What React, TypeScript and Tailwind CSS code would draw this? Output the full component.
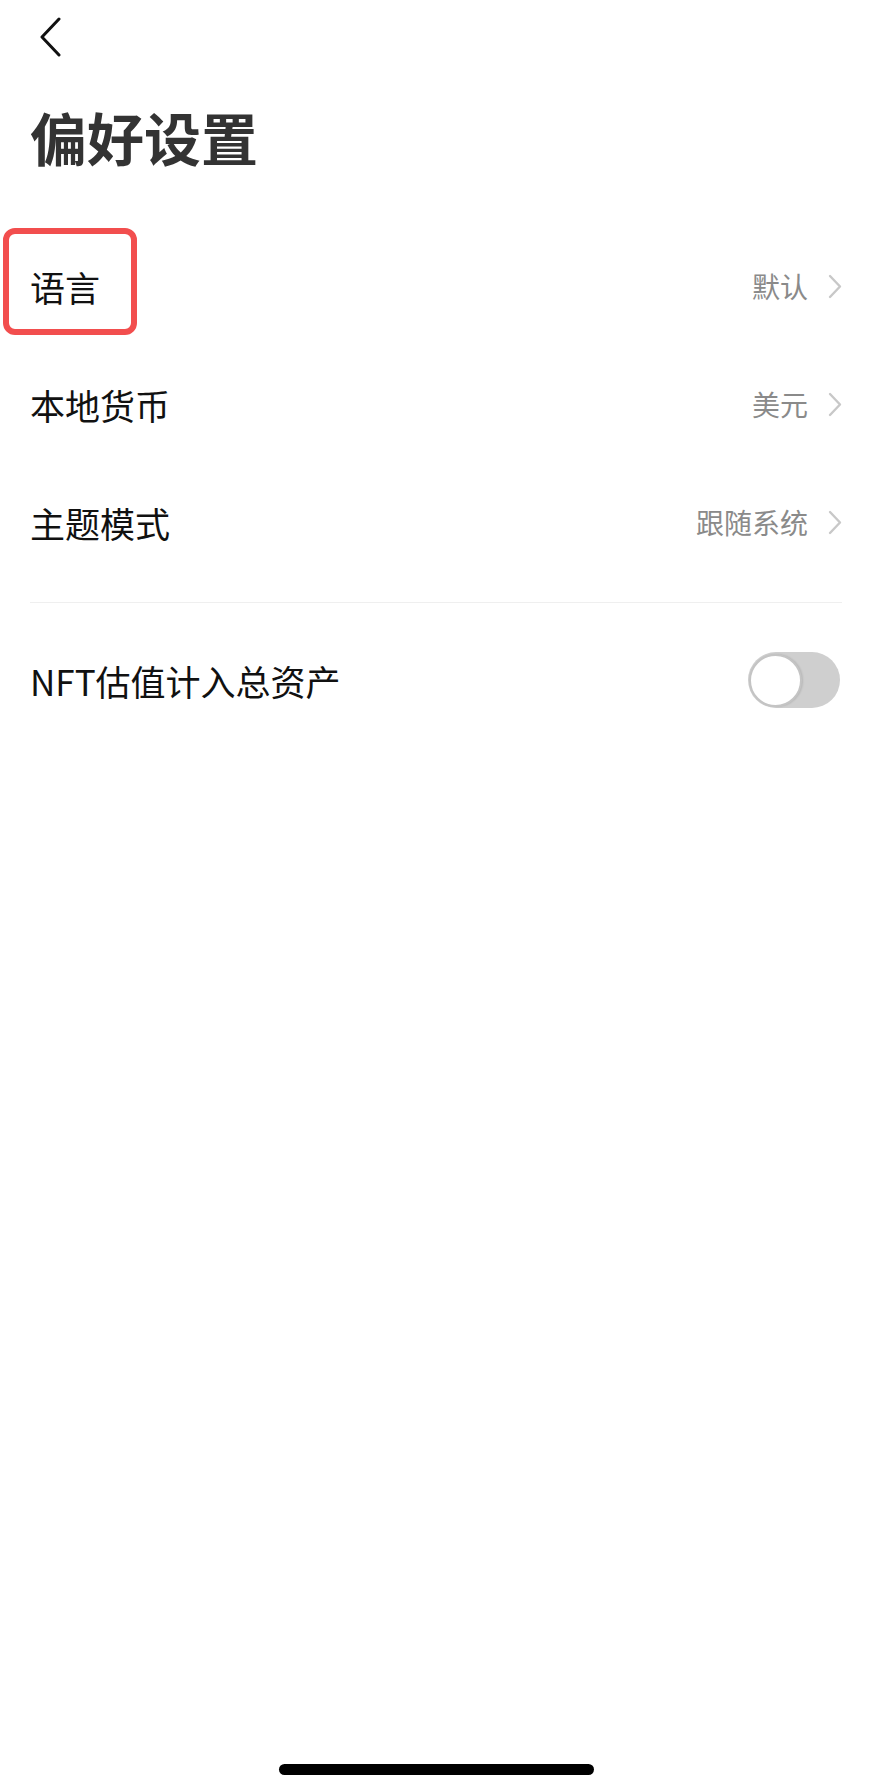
import React from "react";

function Chevron() {
  return (
    <svg width="14" height="25" viewBox="0 0 14 25" fill="none">
      <path d="M2 2 L12 12.5 L2 23" stroke="#c8c8c8" strokeWidth="2.4" strokeLinecap="round" strokeLinejoin="round" />
    </svg>
  );
}

function Row({ label, value }: { label: string; value: string }) {
  return (
    <div className="flex h-[118px] items-center justify-between">
      <span className="text-[35px] font-normal leading-none text-[#111]">{label}</span>
      <div className="flex items-center gap-[20px]">
        <span className="text-[28px] leading-none text-[#8a8a8a]">{value}</span>
        <Chevron />
      </div>
    </div>
  );
}

export default function App() {
  return (
    <div
      className="relative flex h-[1790px] w-[872px] flex-col bg-white"
      style={{ fontFamily: '"Noto Sans CJK SC", "Noto Sans", sans-serif' }}
    >
      <div className="flex h-[108px] items-start pl-[40px] pt-[17px]">
        <svg width="22" height="40" viewBox="0 0 22 40" fill="none">
          <path d="M19 2 L2 20 L19 38" stroke="#111" strokeWidth="3" strokeLinecap="round" strokeLinejoin="round" />
        </svg>
      </div>
      <h1 className="pl-[30px] text-[57px] font-bold leading-none text-[#333]">偏好设置</h1>
      <div className="mt-[62px] px-[30px]">
        <Row label="语言" value="默认" />
        <Row label="本地货币" value="美元" />
        <Row label="主题模式" value="跟随系统" />
        <div className="mt-[21px] h-px bg-[#efefef]" />
        <div className="flex h-[154px] items-center justify-between">
          <span className="text-[35px] font-normal leading-none text-[#111]">NFT估值计入总资产</span>
          <div className="mr-[2px] flex h-[56px] w-[92px] items-center rounded-full bg-[#cfcfcf] pl-[1px]">
            <div className="h-[53px] w-[53px] rounded-full border-[2px] border-[#c4c4c4] bg-white shadow-[1px_0_2px_rgba(0,0,0,0.12)]" />
          </div>
        </div>
      </div>
      <div className="mx-auto mb-[15px] mt-auto h-[11px] w-[315px] rounded-full bg-black" />
      <div className="absolute left-[3px] top-[228px] h-[107px] w-[134px] rounded-[12px] border-[6px] border-[#f24e4e]" />
    </div>
  );
}
